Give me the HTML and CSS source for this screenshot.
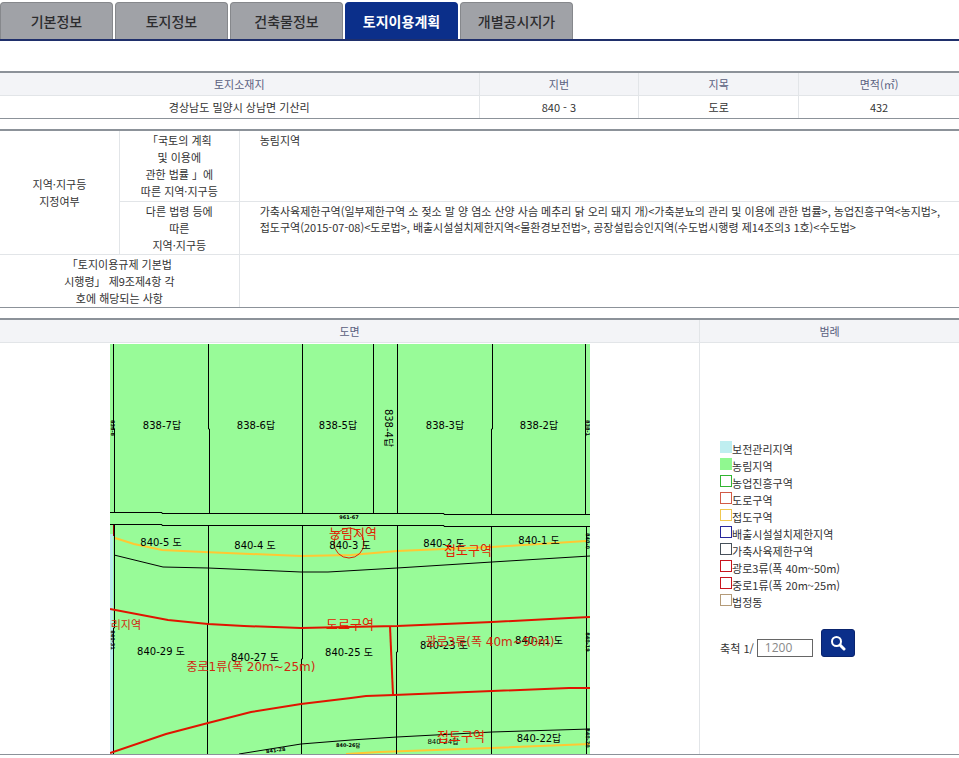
FILE: index.html
```html
<!DOCTYPE html>
<html lang="ko">
<head>
  <meta charset="UTF-8">
  <meta name="viewport" content="width=device-width, initial-scale=1">
  <title>토지이용계획</title>
  <link rel="stylesheet" href="styles.css">
</head>
<body>
  <nav class="tabs">
    <a href="#">기본정보</a>
    <a href="#">토지정보</a>
    <a href="#">건축물정보</a>
    <a href="#" class="on">토지이용계획</a>
    <a href="#">개별공시지가</a>
  </nav>

  <!-- 토지 기본 -->
  <table class="tbl land">
    <thead>
      <tr>
        <th class="addr">토지소재지</th>
        <th>지번</th>
        <th>지목</th>
        <th>면적(㎡)</th>
      </tr>
    </thead>
    <tbody>
      <tr>
        <td>경상남도 밀양시 상남면 기산리</td>
        <td>840 - 3</td>
        <td>도로</td>
        <td>432</td>
      </tr>
    </tbody>
  </table>

  <!-- 지역지구 -->
  <table class="tbl zone">
    <colgroup>
      <col class="c1">
      <col class="c1">
      <col>
    </colgroup>
    <tbody>
      <tr>
        <th rowspan="2">지역·지구등<br>지정여부</th>
        <th class="law">「국토의 계획<br>및 이용에<br>관한 법률 」에<br>따른 지역·지구등</th>
        <td>농림지역</td>
      </tr>
      <tr>
        <th>다른 법령 등에<br>따른<br>지역·지구등</th>
        <td>가축사육제한구역(일부제한구역 소 젖소 말 양 염소 산양 사슴 메추리 닭 오리 돼지 개)&lt;가축분뇨의 관리 및 이용에 관한 법률&gt;, 농업진흥구역&lt;농지법&gt;,<br>접도구역(2015-07-08)&lt;도로법&gt;, 배출시설설치제한지역&lt;물환경보전법&gt;, 공장설립승인지역(수도법시행령 제14조의3 1호)&lt;수도법&gt;</td>
      </tr>
      <tr>
        <th colspan="2">「토지이용규제 기본법<br>시행령」 제9조제4항 각<br>호에 해당되는 사항</th>
        <td></td>
      </tr>
    </tbody>
  </table>

  <!-- 도면 / 범례 -->
  <table class="tbl plan">
    <thead>
      <tr>
        <th class="draw">도면</th>
        <th>범례</th>
      </tr>
    </thead>
    <tbody>
      <tr>
        <td class="map-cell">
          <svg class="map" viewBox="0 0 480 410" width="480" height="410">
            <rect width="480" height="410" fill="#98fb98"/>
            <rect y="190" width="3" height="220" fill="#b9ecec"/>

            <!-- 접도구역 -->
            <g class="line-access">
              <path d="M5 194L24 200L52 206L94 208L191 212L241 211L287 207L382 203L476 197"/>
              <path d="M236 410L269 408L382 404L480 400"/>
            </g>

            <!-- 필지 경계 -->
            <g class="line-lot">
              <path d="M3.5 0V85H4.5V168M4.5 180V284H3.5V410"/>
              <path d="M98.5 0V85H99.5V169M98.5 181V280H97.5V410"/>
              <path d="M192.5 0V169M192.5 181V315H191.5V410"/>
              <path d="M263.5 0V169M287.5 0V169M287.5 181V308H286.5V410"/>
              <path d="M382.5 0V85H381.5V170M381.5 182V410"/>
              <path d="M475.5 0V170M476.5 182V410"/>
              <path d="M0 168.5H52V169.5H334V170.5H480"/>
              <path d="M0 180.5H52V181.5H334V182.5H480"/>
              <path d="M4 211L53 223L98 224L191 228L218 228L287 224L382 218L480 212"/>
              <path d="M129 410L191 400L241 396L287 393L382 388L480 385"/>
            </g>

            <!-- 도로 -->
            <g class="line-road">
              <path d="M0 265L58 276L98 280L134 282L191 284L236 283L287 282L382 278L459 274L480 273"/>
              <path d="M280 282L283 351"/>
              <path d="M0 409L56 390L98 379L141 368L191 360L241 354L256 352L284 351L382 347L459 344L480 344"/>
            </g>
            <path d="M3.5 181V192" stroke="#900" fill="none"/>
            <circle cx="239" cy="199" r="15" fill="none" stroke="#e02000"/>

            <g class="lot">
              <text x="52" y="85">838-7답</text>
              <text x="146" y="85">838-6답</text>
              <text x="228" y="85">838-5답</text>
              <text transform="translate(275 84) rotate(90)">838-4답</text>
              <text x="335" y="85">838-3답</text>
              <text x="429" y="85">838-2답</text>
              <text x="51" y="202">840-5 도</text>
              <text x="145" y="205">840-4 도</text>
              <text x="240" y="205">840-3 도</text>
              <text x="334" y="203">840-2 도</text>
              <text x="429" y="200">840-1 도</text>
              <text x="51" y="311">840-29 도</text>
              <text x="145" y="317">840-27 도</text>
              <text x="239" y="312">840-25 도</text>
              <text x="334" y="305">840-23 도</text>
              <text x="429" y="300">840-21 도</text>
              <text x="429" y="398">840-22답</text>
            </g>
            <g class="lot small">
              <text x="333" y="400">840-24답</text>
            </g>
            <g class="lot tiny">
              <text x="239" y="175">961-67</text>
              <text x="238" y="403">840-26답</text>
              <text transform="translate(166 408) rotate(-8)">841-28</text>
              <text transform="translate(1 84) rotate(90)">838-8</text>
              <text transform="translate(1 296) rotate(90)">840-31</text>
              <text transform="translate(476 84) rotate(90)">838-1</text>
              <text transform="translate(476 197) rotate(90)">840-0</text>
              <text transform="translate(476 298) rotate(90)">840-19</text>
              <text transform="translate(476 394) rotate(90)">840-20</text>
            </g>
            <g class="zone-name">
              <text x="243" y="194">농림지역</text>
              <text x="358" y="211">접도구역</text>
              <text x="240" y="285">도로구역</text>
              <text x="351" y="397">접도구역</text>
            </g>
            <g class="road-name">
              <text x="141" y="327">중로1류(폭 20m~25m)</text>
              <text x="380" y="302">광로3류(폭 40m~50m)</text>
            </g>
            <text class="edge-name" x="31" y="285">관리지역</text>
          </svg>
        </td>
        <td class="legend-cell">
          <ul class="legend">
            <li><i class="box conserve"></i>보전관리지역</li>
            <li><i class="box farm"></i>농림지역</li>
            <li><i class="box promote"></i>농업진흥구역</li>
            <li><i class="box road"></i>도로구역</li>
            <li><i class="box access"></i>접도구역</li>
            <li><i class="box drain"></i>배출시설설치제한지역</li>
            <li><i class="box cattle"></i>가축사육제한구역</li>
            <li><i class="box wide"></i>광로3류(폭 40m~50m)</li>
            <li><i class="box wide"></i>중로1류(폭 20m~25m)</li>
            <li><i class="box dong"></i>법정동</li>
          </ul>
          <form class="scale">
            <label for="scale">축척 1/</label>
            <input type="text" id="scale" value="1200">
            <button type="button" aria-label="검색">
              <svg viewBox="0 0 16 16" width="16" height="16">
                <circle cx="6.5" cy="6.5" r="4.5" fill="none" stroke="#fff" stroke-width="2"/>
                <path d="M10 10L14 14" stroke="#fff" stroke-width="3" stroke-linecap="round"/>
              </svg>
            </button>
          </form>
        </td>
      </tr>
    </tbody>
  </table>
</body>
</html>
```

FILE: styles.css
```css
* {
  box-sizing: border-box;
}
body {
  margin: 0;
  background: #fff;
  color: #333;
  font-family: "Noto Sans CJK KR", sans-serif;
  font-size: 11px;
  line-height: 17px;
}

/* tabs */
.tabs {
  display: flex;
  gap: 2px;
  padding-top: 2px;
  margin-bottom: 30px;
  border-bottom: 2px solid #1f2f6b;
}
.tabs a {
  width: 113px;
  height: 37px;
  border: 1px solid #86888c;
  border-bottom: 0;
  border-radius: 4px 4px 0 0;
  background: #a0a2a7;
  color: #2c2c2e;
  font-size: 14px;
  font-weight: 500;
  line-height: 37px;
  text-align: center;
  text-decoration: none;
}
.tabs a.on {
  border-color: #0b2f8a;
  background: #0b2f8a;
  color: #fff;
  font-weight: bold;
}

/* tables */
.tbl {
  width: 100%;
  margin-bottom: 10px;
  border-top: 2px solid #8c9299;
  border-bottom: 1px solid #8c9299;
  border-spacing: 0;
  table-layout: fixed;
}
.tbl th,
.tbl td {
  padding: 0;
  border-right: 1px solid #e2e5e8;
  border-bottom: 1px solid #e2e5e8;
  font-weight: normal;
  text-align: center;
}
.tbl th:last-child,
.tbl td:last-child {
  border-right: 0;
}
.tbl tbody tr:last-child > * {
  border-bottom: 0;
}
.tbl thead th {
  height: 23px;
  background: #f3f4f7;
  color: #5a6080;
}
.land .addr {
  width: 50%;
}
.land td {
  height: 22px;
}
.zone .c1 {
  width: 12.5%;
}
.zone tbody th {
  padding-top: 1px;
}
.zone tbody .law {
  padding-bottom: 1px;
}
.zone tbody td {
  padding: 1px 0 0 20px;
  line-height: 16px;
  text-align: left;
  vertical-align: top;
}
.plan .draw {
  width: 73%;
}
.plan .map-cell {
  padding-top: 1px;
}

/* map */
.map {
  display: block;
  max-width: 100%;
  height: auto;
  margin: 0 auto;
}
.map text {
  font-family: "DejaVu Sans", "Noto Sans CJK KR", sans-serif;
  text-anchor: middle;
}
.line-lot {
  fill: none;
  stroke: #000;
}
.line-access {
  fill: none;
  stroke: #ffc832;
  stroke-width: 2;
}
.line-road {
  fill: none;
  stroke: #e01400;
  stroke-width: 2;
}
.lot {
  fill: #000;
  font-size: 10px;
}
.small {
  font-size: 7px;
}
.tiny {
  font-size: 5px;
  font-weight: bold;
}
.zone-name {
  fill: #e02000;
  font-size: 13px;
}
.road-name {
  fill: #d02810;
  font-size: 12px;
}
.map .edge-name {
  fill: #d02810;
  font-size: 11px;
  text-anchor: end;
}

/* legend */
.tbl .legend-cell {
  padding-left: 20px;
  text-align: left;
}
.legend {
  margin: 0 0 18px;
  padding: 0;
  list-style: none;
}
.legend li {
  display: flex;
  align-items: flex-start;
}
.box {
  width: 12px;
  height: 12px;
  border: 1px solid;
}
.conserve { border-color: #bfeef0; background: #bfeef0; }
.farm { border-color: #90f890; background: #90f890; }
.promote { border-color: #32b432; }
.road { border-color: #d25a46; }
.access { border-color: #f0c850; }
.drain { border-color: #28289b; }
.cattle { border-color: #46505a; }
.wide { border-color: #c8141e; }
.dong { border-color: #b49b78; }

.scale {
  display: flex;
  align-items: flex-end;
  gap: 3px;
}
.scale input {
  width: 56px;
  height: 18px;
  padding: 0 7px;
  border: 1px solid #666;
  color: #888;
  font-family: "Open Sans", sans-serif;
  font-size: 12px;
}
.scale button {
  display: flex;
  align-items: center;
  justify-content: center;
  width: 34px;
  height: 28px;
  margin-left: 5px;
  padding: 0;
  border: 1px solid #0a246e;
  border-radius: 3px;
  background: #0b2f8a;
  cursor: pointer;
}
```
